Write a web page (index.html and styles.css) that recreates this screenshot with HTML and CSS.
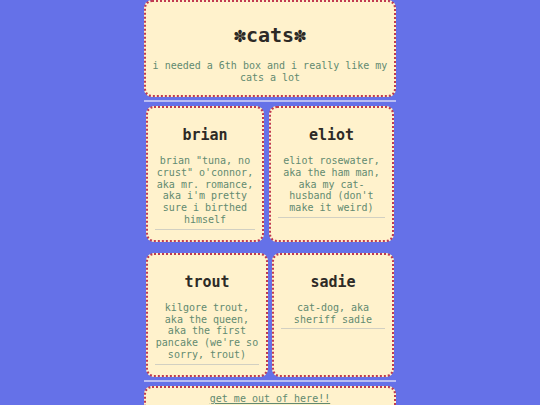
FILE: index.html
```html
<!DOCTYPE html>
<html>
<head>
<meta charset="utf-8">
<title>cats</title>
<link rel="stylesheet" href="styles.css">
</head>
<body>
<div class="page">
  <section class="box intro">
    <h1 class="title">✽cats✽</h1>
    <p class="intro-text">i needed a 6th box and i really like my cats a lot</p>
  </section>
  <div class="divider"></div>
  <div class="row row-one">
    <article class="box card card-brian">
      <h2 class="name">brian</h2>
      <p class="desc">brian "tuna, no crust" o'connor, aka mr. romance, aka i'm pretty sure i birthed himself</p>
    </article>
    <article class="box card card-eliot">
      <h2 class="name">eliot</h2>
      <p class="desc">eliot rosewater, aka the ham man, aka my cat-husband (don't make it weird)</p>
    </article>
  </div>
  <div class="row row-two">
    <article class="box card card-trout">
      <h2 class="name">trout</h2>
      <p class="desc">kilgore trout, aka the queen, aka the first pancake (we're so sorry, trout)</p>
    </article>
    <article class="box card card-sadie">
      <h2 class="name">sadie</h2>
      <p class="desc">cat-dog, aka sheriff sadie</p>
    </article>
  </div>
  <div class="divider divider-low"></div>
  <section class="box footer">
    <a class="escape" href="#">get me out of here!!</a>
  </section>
</div>
</body>
</html>
```
FILE: styles.css
```css
html, body {
  margin: 0;
  padding: 0;
}
body {
  background: #6571e8;
  font-family: "DejaVu Sans Mono", "Liberation Mono", monospace;
  font-size: 10px;
  color: #628a70;
}
.page {
  width: 252px;
  margin: 0 auto;
}
.box {
  background: #fff2cc;
  border: 2px dotted #c03a50;
  border-radius: 8px;
  box-sizing: border-box;
  text-align: center;
}
.intro {
  padding: 21px 4px 11px;
}
.title {
  margin: 0;
  font-size: 20px;
  line-height: 24px;
  font-weight: bold;
  color: #2d2a26;
}
.intro-text {
  margin: 13px 0 0;
  line-height: 12px;
}
.divider {
  height: 2px;
  background: #b9bdf4;
  margin: 3px 0 4px;
}
.divider-low {
  margin-top: 3px;
}
.row {
  display: flex;
  padding: 0 2px;
}
.row-one {
  gap: 5px;
}
.row-two {
  gap: 4px;
  margin-top: 11px;
}
.card {
  padding: 18px 7px 10px;
}
.card-brian { flex: 0 0 118px; }
.card-eliot { flex: 0 0 125px; }
.card-trout { flex: 0 0 122px; }
.card-sadie { flex: 0 0 122px; }
.name {
  margin: 0;
  font-size: 15px;
  line-height: 18px;
  font-weight: bold;
  color: #2d2a26;
}
.desc {
  margin: 11px 0 0;
  line-height: 11.8px;
  padding-bottom: 3px;
  border-bottom: 1px solid #d2d0c2;
}
.footer {
  padding: 5px 4px 20px;
}
.escape {
  color: #628a70;
  text-decoration: underline;
}
```
